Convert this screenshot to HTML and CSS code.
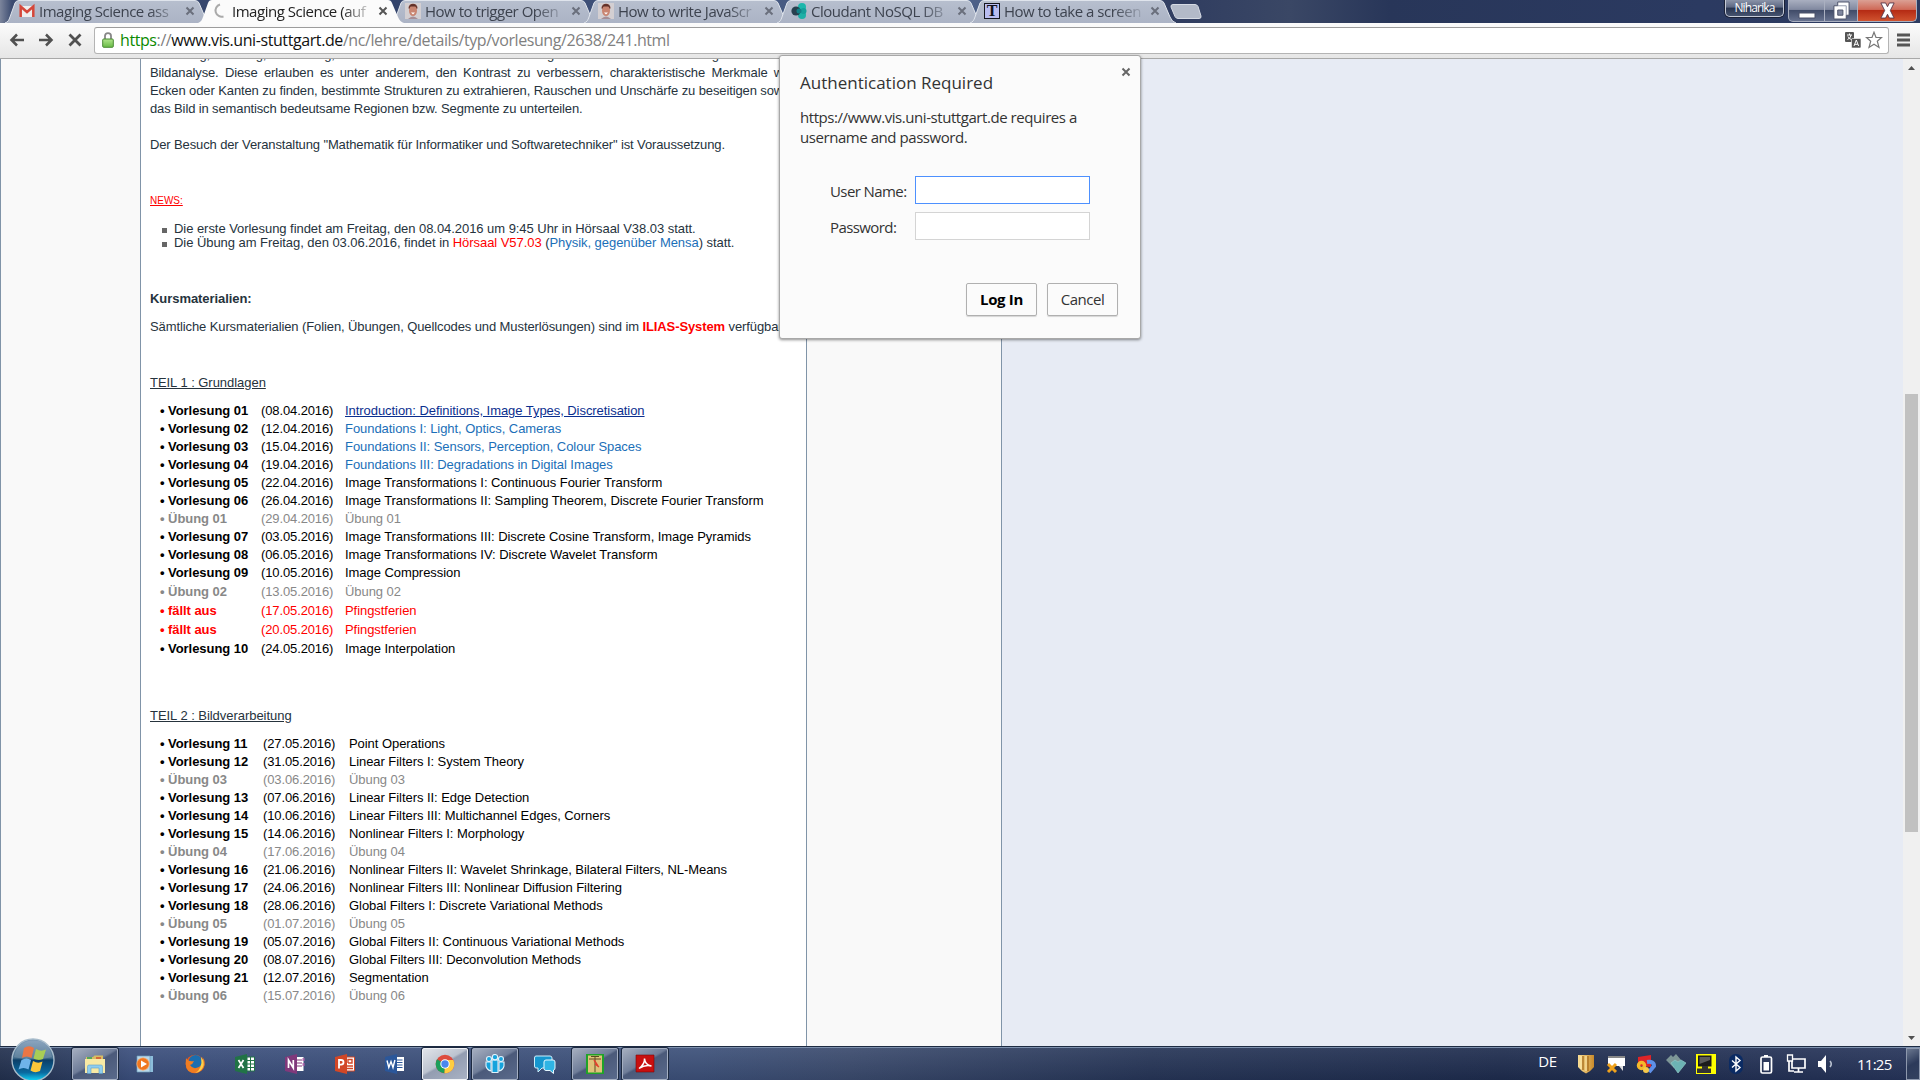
FILE: index.html
```html
<!DOCTYPE html>
<html lang="de">
<head>
<meta charset="utf-8">
<title>Imaging Science</title>
<link rel="stylesheet" href="styles.css">
</head>
<body>
<svg class="defs" width="0" height="0" aria-hidden="true">
  <defs>
    <linearGradient id="gTab" x1="0" x2="0" y1="0" y2="1"><stop offset="0" stop-color="#b7bfce"/><stop offset="1" stop-color="#abb3c5"/></linearGradient>
    <linearGradient id="gOrb" x1="0" x2="0" y1="0" y2="1"><stop offset="0" stop-color="#7d9ab8"/><stop offset=".45" stop-color="#48708f"/><stop offset=".5" stop-color="#0c3f68"/><stop offset=".8" stop-color="#0a6aa0"/><stop offset="1" stop-color="#12d8fa"/></linearGradient>
    <linearGradient id="gLock" x1="0" x2="0" y1="0" y2="1"><stop offset="0" stop-color="#b2e68c"/><stop offset="1" stop-color="#67b945"/></linearGradient>
    <linearGradient id="gGold" x1="0" x2="1" y1="0" y2="0"><stop offset="0" stop-color="#f9df96"/><stop offset="1" stop-color="#c98a2a"/></linearGradient>
    <symbol id="shape" viewBox="0 0 206 23"><path d="M0 23C3 22 4 20 5 17L10 3Q11 .5 14 .5H190Q193 .5 194 3L200 17Q202 22 206 23Z" fill="url(#gTab)"/><path d="M0 23C3 22 4 20 5 17L10 3Q11 .5 14 .5H190Q193 .5 194 3L200 17Q202 22 206 23" fill="none" stroke="#dfe4ec" stroke-width="1"/></symbol>
    <symbol id="face" viewBox="0 0 16 16"><path fill="#d3cfd2" d="M0 0h16v16H0z"/><path fill="#7a3f33" d="M3.500 5.500C3-1 13-1 12.500 5.500z"/><ellipse cx="8" cy="7.500" rx="4" ry="5.500" fill="#c98571"/><path fill="#5f3029" d="M4 6C3.500-.5 12.500-.5 12 6L10.500 3.500H5.500z"/><path fill="#fff" d="M6 9.500h4L8 11.500z"/><path fill="#a58e96" d="M3 16q5-5 10 0z"/></symbol>
    <symbol id="x" viewBox="0 0 10 10"><path d="M1.500 1.500l7 7m0-7l-7 7" stroke="currentColor" stroke-width="2" fill="none"/></symbol>
    <symbol id="leaf" viewBox="0 0 22 20"><path d="M1 3L13 0v20L1 17z" fill="currentColor"/></symbol>
  </defs>
</svg>

<header class="frame">
  <div class="tabs">
    <div class="tab"><svg class="tab-bg"><use href="#shape"/></svg>
      <svg class="fav" viewBox="0 0 16 16"><path d="M1 3h14v11H1z" fill="#eee"/><path d="M1.700 14V3.500L8 9l6.300-5.500V14" fill="none" stroke="#d5473a" stroke-width="2.500"/></svg>
      <span class="label">Imaging Science ass</span><svg class="close"><use href="#x"/></svg></div>
    <div class="tab active"><svg class="tab-bg" viewBox="0 0 206 23"><path fill="#fbfbfb" d="M0 23C3 22 4 20 5 17L10 3Q11 0 14 0H190Q193 0 194 3L200 17Q202 22 206 23Z"/></svg>
      <svg class="fav" viewBox="0 0 16 16"><path d="M8 1.500A6 6 0 1 0 11.500 13.500" fill="none" stroke="#aaa" stroke-width="2"/></svg>
      <span class="label">Imaging Science (auf</span><svg class="close"><use href="#x"/></svg></div>
    <div class="tab"><svg class="tab-bg"><use href="#shape"/></svg>
      <svg class="fav"><use href="#face"/></svg>
      <span class="label">How to trigger Open</span><svg class="close"><use href="#x"/></svg></div>
    <div class="tab"><svg class="tab-bg"><use href="#shape"/></svg>
      <svg class="fav"><use href="#face"/></svg>
      <span class="label">How to write JavaScr</span><svg class="close"><use href="#x"/></svg></div>
    <div class="tab"><svg class="tab-bg"><use href="#shape"/></svg>
      <svg class="fav" viewBox="0 0 16 16"><circle cx="11" cy="4" r="4" fill="#1cb7ac"/><circle cx="11" cy="12" r="4" fill="#1cb0a6"/><circle cx="12.500" cy="8" r="3" fill="#159f9a"/><circle cx="5" cy="8" r="4.600" fill="#28404e"/><circle cx="8" cy="8" r="2.500" fill="#127f86"/></svg>
      <span class="label">Cloudant NoSQL DB</span><svg class="close"><use href="#x"/></svg></div>
    <div class="tab"><svg class="tab-bg"><use href="#shape"/></svg>
      <span class="fav tee">T</span>
      <span class="label">How to take a screen</span><svg class="close"><use href="#x"/></svg></div>
    <svg class="newtab" viewBox="0 0 32 15"><path d="M3 .5H25Q27 .5 28 2.500L31 12Q31.500 14.500 29 14.500H8Q6 14.500 5 12.500L1 3Q.500.500 3 .5z" fill="#b3bac8" stroke="#d6dbe4"/></svg>
  </div>
  <div class="user">Niharika</div>
  <div class="winbtns">
    <span class="wb min"><svg viewBox="0 0 18 8"><path d="M1 2h16v5H1z" fill="#fff" stroke="#4a5168"/></svg></span>
    <span class="wb max"><svg viewBox="0 0 18 20"><path d="M5 1h12v14h-3v4H1V5h4z" fill="#fff" stroke="#4a5168"/><path d="M5 9.500h5.500v5.500H5z" fill="#8088a0" stroke="#4a5168"/><path d="M5 5h9v10" fill="none" stroke="#8f96a9"/></svg></span>
    <span class="wb cls"><svg viewBox="0 0 18 18"><path d="M2 1h5l2 4 2-4h5l-4 8 4 8h-5l-2-4-2 4H2l4-8z" fill="#fff" stroke="#5b3c4c"/></svg></span>
  </div>
</header>

<div class="toolbar">
  <svg class="nav" viewBox="0 0 16 14"><path d="M15 7H3M8 1.500L2.500 7L8 12.500" fill="none" stroke="#505050" stroke-width="2.500"/></svg>
  <svg class="nav" viewBox="0 0 16 14"><path d="M1 7H13M8 1.500L13.500 7L8 12.500" fill="none" stroke="#505050" stroke-width="2.500"/></svg>
  <svg class="nav" viewBox="0 0 16 14"><path d="M2.500 1.500L13.500 12.500M13.500 1.500L2.500 12.500" fill="none" stroke="#505050" stroke-width="2.800"/></svg>
  <div class="omnibox">
    <svg class="lock" viewBox="0 0 12 16"><path d="M3 8V4Q3 1.200 6 1.200T9 4V8" fill="none" stroke="#878787" stroke-width="1.800"/><rect x=".7" y="7" width="10.600" height="8.300" rx="1" fill="url(#gLock)" stroke="#4a8a35"/></svg>
    <div class="url"><b>https</b>://<i>www.vis.uni-stuttgart.de</i>/nc/lehre/details/typ/vorlesung/2638/241.html</div>
    <svg class="translate" viewBox="0 0 16 16"><rect width="9" height="10" rx="1" fill="#555"/><rect x="6.500" y="6.500" width="9.500" height="9.500" rx="1" fill="#555" stroke="#fff" stroke-width=".6"/><path d="M2 3h5M4.500 1.500V3M2.500 7.500Q6 6 6 3M3 4.500Q4 7 6.500 7.500" stroke="#fff" fill="none"/><path d="M9 14l2.300-6 2.300 6M9.800 12.300h3" stroke="#fff" fill="none"/></svg>
    <svg class="star" viewBox="0 0 18 18"><path d="M9 1.200l2 5.300h5.500L12.300 10.200 14 16.500 9 13.200 4 16.500 5.700 10.200 1.500 6.500H7z" fill="#fff" stroke="#777" stroke-width="1.200"/></svg>
  </div>
  <svg class="burger" viewBox="0 0 13 14"><path d="M0 2h13M0 7h13M0 12h13" stroke="#555" stroke-width="3"/></svg>
</div>

<main class="view">
  <div class="side left"></div>
  <article class="content">
    <div class="prose">
      <p class="line cut"><span>Entfaltung,</span> <span>Filterung,</span> <span>Erkennung,</span> <span class="w2">und Restauration sowie die Bewertung</span> <span class="w3">der mathematischen Umsetzung</span></p>
      <p class="line full">Bildanalyse. Diese erlauben es unter anderem, den Kontrast zu verbessern, charakteristische Merkmale wie</p>
      <p class="line full">Ecken oder Kanten zu finden, bestimmte Strukturen zu extrahieren, Rauschen und Unschärfe zu beseitigen sowie</p>
      <p class="line">das Bild in semantisch bedeutsame Regionen bzw. Segmente zu unterteilen.</p>
      <p class="line gap1">Der Besuch der Veranstaltung "Mathematik für Informatiker und Softwaretechniker" ist Voraussetzung.</p>
    </div>
    <p class="news">NEWS:</p>
    <ul class="newslist">
      <li>Die erste Vorlesung findet am Freitag, den 08.04.2016 um 9:45 Uhr in Hörsaal V38.03 statt.</li>
      <li>Die Übung am Freitag, den 03.06.2016, findet in <em>Hörsaal V57.03</em> (<a>Physik, gegenüber Mensa</a>) statt.</li>
    </ul>
    <h3 class="line kurs">Kursmaterialien:</h3>
    <p class="line mat">Sämtliche Kursmaterialien (Folien, Übungen, Quellcodes und Musterlösungen) sind im <strong>ILIAS-System</strong> verfügbar.</p>

    <h4 class="line part">TEIL 1 : Grundlagen</h4>
    <ul class="sched">
      <li><b>• Vorlesung 01</b><span>(08.04.2016)</span><a class="hover">Introduction: Definitions, Image Types, Discretisation</a></li>
      <li><b>• Vorlesung 02</b><span>(12.04.2016)</span><a>Foundations I: Light, Optics, Cameras</a></li>
      <li><b>• Vorlesung 03</b><span>(15.04.2016)</span><a>Foundations II: Sensors, Perception, Colour Spaces</a></li>
      <li><b>• Vorlesung 04</b><span>(19.04.2016)</span><a>Foundations III: Degradations in Digital Images</a></li>
      <li><b>• Vorlesung 05</b><span>(22.04.2016)</span><span>Image Transformations I: Continuous Fourier Transform</span></li>
      <li><b>• Vorlesung 06</b><span>(26.04.2016)</span><span>Image Transformations II: Sampling Theorem, Discrete Fourier Transform</span></li>
      <li class="ex"><b>• Übung 01</b><span>(29.04.2016)</span><span>Übung 01</span></li>
      <li><b>• Vorlesung 07</b><span>(03.05.2016)</span><span>Image Transformations III: Discrete Cosine Transform, Image Pyramids</span></li>
      <li><b>• Vorlesung 08</b><span>(06.05.2016)</span><span>Image Transformations IV: Discrete Wavelet Transform</span></li>
      <li><b>• Vorlesung 09</b><span>(10.05.2016)</span><span>Image Compression</span></li>
      <li class="ex tall"><b>• Übung 02</b><span>(13.05.2016)</span><span>Übung 02</span></li>
      <li class="off tall"><b>• fällt aus</b><span>(17.05.2016)</span><span>Pfingstferien</span></li>
      <li class="off tall"><b>• fällt aus</b><span>(20.05.2016)</span><span>Pfingstferien</span></li>
      <li class="tall"><b>• Vorlesung 10</b><span>(24.05.2016)</span><span>Image Interpolation</span></li>
    </ul>

    <h4 class="line part two">TEIL 2 : Bildverarbeitung</h4>
    <ul class="sched wide">
      <li><b>• Vorlesung 11</b><span>(27.05.2016)</span><span>Point Operations</span></li>
      <li><b>• Vorlesung 12</b><span>(31.05.2016)</span><span>Linear Filters I: System Theory</span></li>
      <li class="ex"><b>• Übung 03</b><span>(03.06.2016)</span><span>Übung 03</span></li>
      <li><b>• Vorlesung 13</b><span>(07.06.2016)</span><span>Linear Filters II: Edge Detection</span></li>
      <li><b>• Vorlesung 14</b><span>(10.06.2016)</span><span>Linear Filters III: Multichannel Edges, Corners</span></li>
      <li><b>• Vorlesung 15</b><span>(14.06.2016)</span><span>Nonlinear Filters I: Morphology</span></li>
      <li class="ex"><b>• Übung 04</b><span>(17.06.2016)</span><span>Übung 04</span></li>
      <li><b>• Vorlesung 16</b><span>(21.06.2016)</span><span>Nonlinear Filters II: Wavelet Shrinkage, Bilateral Filters, NL-Means</span></li>
      <li><b>• Vorlesung 17</b><span>(24.06.2016)</span><span>Nonlinear Filters III: Nonlinear Diffusion Filtering</span></li>
      <li><b>• Vorlesung 18</b><span>(28.06.2016)</span><span>Global Filters I: Discrete Variational Methods</span></li>
      <li class="ex"><b>• Übung 05</b><span>(01.07.2016)</span><span>Übung 05</span></li>
      <li><b>• Vorlesung 19</b><span>(05.07.2016)</span><span>Global Filters II: Continuous Variational Methods</span></li>
      <li><b>• Vorlesung 20</b><span>(08.07.2016)</span><span>Global Filters III: Deconvolution Methods</span></li>
      <li><b>• Vorlesung 21</b><span>(12.07.2016)</span><span>Segmentation</span></li>
      <li class="ex"><b>• Übung 06</b><span>(15.07.2016)</span><span>Übung 06</span></li>
    </ul>
  </article>
  <div class="side right"></div>
  <div class="rest"></div>
  <div class="scroll">
    <svg class="arrow" viewBox="0 0 7 4"><path d="M0 4L3.500 0 7 4z" fill="#505050"/></svg>
    <div class="thumb"></div>
    <svg class="arrow" viewBox="0 0 7 4"><path d="M0 0h7L3.500 4z" fill="#505050"/></svg>
  </div>
</main>

<section class="dialog">
  <svg class="dclose"><use href="#x"/></svg>
  <h2>Authentication Required</h2>
  <p>https://www.vis.uni-stuttgart.de requires a<br>username and password.</p>
  <div class="form">
    <span>User Name:</span><div class="field focus"></div>
    <span>Password:</span><div class="field"></div>
  </div>
  <div class="actions"><div class="btn primary">Log In</div><div class="btn">Cancel</div></div>
</section>

<footer class="taskbar">
  <div class="orb">
    <svg viewBox="0 0 44 44"><circle cx="22" cy="22" r="21" fill="url(#gOrb)" stroke="#a8bccb" stroke-width="1.400"/>
      <path d="M13 10q5-3.500 10 0l-2.500 10q-5-3-9.500 0z" fill="#e8622a"/><path d="M25 11q5 3 10 .5l-3 9.500q-5 2-9.500-.5z" fill="#9cc63c"/><path d="M10.500 22q5-3 9.500 0l-2.500 9.500q-5-3-10 0z" fill="#6fb4ea"/><path d="M22 23q5 3 9.500.5L29 33q-5 2.500-9.500-.5z" fill="#fbc73a"/><path d="M3 19Q6 3 22 2.500T41 19Q22 24 3 19z" fill="#fff" opacity=".13"/></svg>
  </div>
  <div class="apps">
    <div class="app open"><svg viewBox="0 0 22 20"><path d="M2 3h7l1.500-1.500H19V18H2z" fill="#d9bd62"/><path d="M1 5h20v14H1z" fill="#f8e9a4"/><path d="M3 3h5v2H3z" fill="#55a65b"/><path d="M12 3h5v2h-5z" fill="#d4693b"/><path d="M3.500 19.500v-7q0-1.500 1.500-1.500h12q1.500 0 1.500 1.500v7h-3.500V14H7v5.500z" fill="#8fcdee" stroke="#5a9fcc" stroke-width=".6"/></svg></div>
    <div class="app"><svg viewBox="0 0 22 20"><path d="M6 2h13v16H6z" fill="#8dbedb"/><path d="M3 2h13v16H3z" fill="#b9d8ea" stroke="#6f9dbc" stroke-width=".7"/><circle cx="9" cy="10" r="6.200" fill="#f0771f" stroke="#f9b77e" stroke-width=".7"/><path d="M7 6.500l6 3.500-6 3.500z" fill="#fff"/></svg></div>
    <div class="app"><svg viewBox="0 0 22 20"><circle cx="11" cy="10" r="9.300" fill="#e6581b"/><circle cx="11.500" cy="8" r="7" fill="#1b6eaf"/><path d="M2 4Q4 8 10 7q-1 3-4 4 3 5 9 2 5-3 3.500-10Q22 8 20 13t-9 6Q2 19 1.700 10z" fill="#ef7d22"/><path d="M17 3q4 5 2 10t-8 6q8-4 6-16z" fill="#fbd04b"/></svg></div>
    <div class="app excel"><svg viewBox="0 0 22 20"><path d="M13 3h7.500v14H13z" fill="#fff" stroke="#217346"/><path d="M13 6.500h7M13 10h7M13 13.500h7M16.500 3v14" stroke="#217346"/><use href="#leaf"/><path d="M4.500 6l5 8m0-8l-5 8" stroke="#fff" stroke-width="1.700"/></svg></div>
    <div class="app onenote"><svg viewBox="0 0 22 20"><path d="M13 3h6.500v14H13z" fill="#fff"/><path d="M13 6h5M13 9h5M13 12h5" stroke="#80397b"/><path d="M18.500 4h2v3h-2zM18.500 9h2v3h-2z" fill="#b06aad"/><use href="#leaf"/><path d="M4.500 14V6l4.800 8V6" fill="none" stroke="#fff" stroke-width="1.700"/></svg></div>
    <div class="app ppt"><svg viewBox="0 0 22 20"><path d="M12 3h8.500v14H12z" fill="#fff" stroke="#d24726"/><path d="M14 9V5.500h4V9h-4M13 12h6M13 14.500h6" fill="none" stroke="#d24726" stroke-width="1.400"/><use href="#leaf"/><path d="M5 14.500V6h2Q9.500 6 9.500 8.300T7 10.700H5" fill="none" stroke="#fff" stroke-width="1.800"/></svg></div>
    <div class="app word"><svg viewBox="0 0 22 20"><path d="M12 3h8v14h-8z" fill="#fff"/><path d="M12 6h6.500M12 8.500h6.500M12 11h6.500M12 13.500h6.500" stroke="#2b579a"/><use href="#leaf"/><path d="M3 6.500l1.800 7L7 7.500l2 6 1.900-7.500" fill="none" stroke="#fff" stroke-width="1.400"/></svg></div>
    <div class="app open lit"><svg viewBox="0 0 22 20"><circle cx="11" cy="10" r="9.300" fill="#dd4b3e"/><path d="M11 10L3 5.300A9.300 9.300 0 0 0 10.500 19.300z" fill="#1c9f5b"/><path d="M11 10L10.500 19.300A9.300 9.300 0 0 0 19.300 6H11z" fill="#fdcd41"/><circle cx="11" cy="10" r="4.700" fill="#fff"/><circle cx="11" cy="10" r="3.700" fill="#4a86ee"/></svg></div>
    <div class="app open"><svg viewBox="0 0 22 20"><g fill="#16a3dc" stroke="#dff3fc" stroke-width="1.100"><circle cx="5" cy="5" r="2.500"/><circle cx="17" cy="5" r="2.500"/><path d="M2 8h5v9q-4-1-5-5zM20 8h-5v9q4-1 5-5z"/><path d="M8 6h6v12.500H8z"/><circle cx="11" cy="3.200" r="2.700"/></g></svg></div>
    <div class="app"><svg viewBox="0 0 22 20"><path d="M2 2h14q2 0 2 2v8q0 2-2 2H8l-4 4v-4H2q-1.500 0-1.500-2V4Q.5 2 2 2z" fill="#1697cf" stroke="#cdeffc"/><path d="M12 6h7q2 0 2 2v6q0 2-1.500 2v3.500L16 16.500h-4q-2 0-2-2V8q0-2 2-2z" fill="#2fb4e4" stroke="#e6f8ff"/></svg></div>
    <div class="app open"><svg viewBox="0 0 22 20"><path d="M2 0h18v20H2z" fill="#1fa328"/><path d="M4 1.500h14v17H4z" fill="#dfc27a"/><path d="M5 5h12M11 3v15M7 2.500h8" stroke="#5c4a22"/><path d="M10 6l4 6M11 10l4 3" stroke="#e0412e" stroke-width="1.400"/></svg></div>
    <div class="app open"><svg viewBox="0 0 22 20"><path d="M2 1h18v17H2z" fill="#c80f0f" stroke="#7c0808" stroke-width=".6"/><path d="M5 14.500Q11 10 10.500 4.500 11 11 17.500 12 11 10.500 5 14.500z" fill="none" stroke="#fff" stroke-width="1.500"/></svg></div>
  </div>
  <div class="lang">DE</div>
  <div class="tray">
    <svg viewBox="0 0 20 20"><path d="M2 1h16v12q-3 4-8 6.500Q5 17 2 13z" fill="url(#gGold)"/><path d="M7 2v14M12 2v15" stroke="#a86f20" stroke-width="1.400"/><path d="M5 2v13M10 2v15" stroke="#fff0b5"/></svg>
    <svg viewBox="0 0 20 20"><path d="M2 2h17v10H2z" fill="#fff"/><path d="M2 2h17v2H2z" fill="#888"/><path d="M13 12h4v5z" fill="#ddd"/><path d="M2 10l8 8M10 10l-8 8" stroke="#efa21c" stroke-width="3"/></svg>
    <svg viewBox="0 0 20 20"><path d="M2 3l13-2v12L2 12z" fill="#df2427"/><path d="M11 8q7-1 7 4l-5 6" fill="none" stroke="#5f90e8" stroke-width="4"/><circle cx="5.500" cy="11.500" r="3" fill="none" stroke="#f4b92b" stroke-width="3.500"/><circle cx="10" cy="16" r="3" fill="#f7c94a"/></svg>
    <svg viewBox="0 0 20 20"><path d="M0 6l5-5 2 2 3-3 5 6-7 8z" fill="#7d9696"/><path d="M5 9l4-3 3 2 3-2 5 3-8 10z" fill="#6cb3b4" stroke="#91c8c6" stroke-width=".7"/></svg>
    <svg viewBox="0 0 20 20"><path d="M0 0h20v20H0z" fill="#ff0"/><path d="M2 1.500h13.500v11H2z" fill="#1c1c1c"/><path d="M3.500 3h10.500v3L3.500 10z" fill="#5c5c5c"/><path d="M6 12h6v3H6zM1 14.500h14V19H1z" fill="#333"/></svg>
    <svg viewBox="0 0 20 20"><rect x="3" width="14" height="20" rx="6.500" fill="#0b2b63"/><path d="M6 6.500l8 7-4 3.500V3l4 3.500-8 7" fill="none" stroke="#fff" stroke-width="1.400"/></svg>
    <svg viewBox="0 0 20 20"><rect x="5" y="3" width="10.500" height="16" rx="1.500" fill="none" stroke="#fff" stroke-width="1.700"/><path d="M8 1h4v2H8zM7.500 8h5.500v8.500H7.500z" fill="#fff"/></svg>
    <svg viewBox="0 0 20 20"><path d="M6 5h13v9H6zM8 18h9M12.500 14v4M3 7v10h5" fill="none" stroke="#fff" stroke-width="1.700"/><path d="M1.500 1h5v6h-5z" fill="#33405f" stroke="#fff" stroke-width="1.300"/></svg>
    <svg viewBox="0 0 20 20"><path d="M2 7h3l5-6v18l-5-6H2z" fill="#fff"/><path d="M14 7q2.500 3 0 6" fill="none" stroke="#b8c0cf" stroke-width="1.600"/></svg>
  </div>
  <div class="clock">11:25</div>
  <div class="desk"></div>
</footer>
</body>
</html>
```
FILE: styles.css
```css
* { box-sizing: border-box; }
body {
  margin: 0; width: 1920px; height: 1080px; overflow: hidden;
  display: flex; flex-direction: column; position: relative;
  font-family: "Open Sans", "Noto Sans", sans-serif; background: #fff;
}
p, h2, h3, h4, ul { margin: 0; padding: 0; list-style: none; font-weight: normal; }
svg { display: block; }
.defs { position: absolute; }

/* window frame */
.frame {
  height: 23px; flex: none; display: flex; align-items: flex-start;
  background: linear-gradient(90deg, #7c859c 0, #3b4b70 12px, #33446c 400px, #51658c 950px, #303d60 1180px, #3a4765 1290px, #283659 1390px, #2b3a61 1700px, #2d3b60 100%);
}
.tabs { display: flex; padding-left: 6px; flex: 1; }
.tab { position: relative; width: 193px; height: 23px; display: flex; align-items: center; padding-left: 13px; padding-bottom: 1px; flex: none; }
.tab-bg { position: absolute; left: -1px; top: 0; width: 206px; height: 23px; }
.tab.active { z-index: 2; }
.fav { position: relative; width: 16px; height: 16px; margin-right: 4px; flex: none; }
.tee { background: #b9bdf0; border: 1px solid #15171f; color: #10121a; font: bold 16px/14px "Liberation Serif", serif; text-align: center; }
.label {
  position: relative; width: 140px; white-space: nowrap;
  font-size: 15px; line-height: 22px; letter-spacing: -.48px; color: #3d434f;
  -webkit-mask-image: linear-gradient(90deg, #000 110px, rgba(0,0,0,.15) 138px);
  mask-image: linear-gradient(90deg, #000 110px, rgba(0,0,0,.15) 138px);
}
.active .label { color: #222; }
.close { position: relative; width: 10px; height: 10px; margin-left: 6px; color: #6a6f7c; flex: none; }
.active .close { color: #555; }
.newtab { width: 32px; height: 15px; margin: 4px 0 0 6px; }
.user {
  width: 59px; height: 17px; margin-right: 4px; border: 1px solid #c5cad6; border-top: 0; border-radius: 0 0 5px 5px;
  background: linear-gradient(#8a93a8 0, #5d6883 45%, #28344f 50%, #46536f); box-shadow: 0 0 0 1px #1b2237;
  color: #fff; font-size: 12px; line-height: 15px; letter-spacing: -.85px; text-align: center;
}
.winbtns { display: flex; width: 132px; height: 23px; }
.wb { display: flex; align-items: center; justify-content: center; height: 22px; border: 1px solid #aab0c0; border-top: 0; background: linear-gradient(#a9afc0, #8189a0 45%, #414c69 50%, #67728f); }
.min { width: 37px; border-radius: 0 0 0 5px; padding-top: 8px; }
.max { width: 33px; border-left: 0; }
.cls { width: 59px; border-left: 0; border-radius: 0 0 5px 0; background: linear-gradient(#dba094, #cf6a58 45%, #b52b14 50%, #d0532f); }
.min svg { width: 18px; height: 8px; }
.max svg { width: 17px; height: 19px; }
.cls svg { width: 17px; height: 17px; }

/* toolbar */
.toolbar { height: 36px; flex: none; display: flex; align-items: center; padding: 0 10px 1px 9px; border-bottom: 1px solid #a8a8a8; background: linear-gradient(#fbfbfb, #e6e6e6); }
.nav { width: 16px; height: 14px; margin-right: 13px; flex: none; }
.omnibox { width: 1795px; height: 27px; margin-left: -2px; display: flex; align-items: center; padding: 0 5px 0 7px; background: #fff; border: 1px solid #b4b4b4; border-top-color: #9c9c9c; border-radius: 3px; flex: none; }
.lock { width: 12px; height: 16px; margin-right: 6px; }
.url { flex: 1; font-size: 16px; line-height: 24px; letter-spacing: -.41px; color: #808080; white-space: nowrap; }
.url b { font-weight: normal; color: #0b8a00; }
.url i { font-style: normal; color: #111; }
.translate { width: 16px; height: 16px; margin-right: 4px; }
.star { width: 18px; height: 18px; }
.burger { width: 13px; height: 14px; margin-left: 8px; }

/* page */
.view { height: 987px; flex: none; display: flex; overflow: hidden; }
.side { background: #f9f9f9; }
.left { width: 140px; border-left: 1px solid #8094a8; }
.content { width: 667px; border: solid #8094a8; border-width: 0 1px; background: #fff; padding-left: 9px; font-family: "Liberation Sans", Arial, sans-serif; font-size: 13px; color: #26333d; }
.right { width: 195px; border-right: 1px solid #8094a8; }
.rest { flex: 1; background: #e7ebf4; }
.scroll { width: 17px; background: #f0f0f0; display: flex; flex-direction: column; align-items: center; padding: 7px 0 6px; }
.arrow { width: 7px; height: 4px; }
.thumb { width: 13px; height: 438px; margin: 324px 0 auto; background: #c1c1c1; }

.line { height: 18px; line-height: 18px; white-space: nowrap; }
.prose { width: 643px; letter-spacing: -.125px; }
.full { text-align: justify; text-align-last: justify; white-space: normal; word-spacing: -1px; }
.cut { margin-top: -13px; display: flex; gap: 4px; letter-spacing: -.2px; }
.w2 { width: 188px; text-align-last: justify; }
.w3 { width: 188px; text-align-last: justify; }
.gap1 { margin-top: 18px; }
.news { margin-top: 40px; height: 14px; font-size: 10px; line-height: 14px; color: #f00; text-decoration: underline; }
.newslist { margin-top: 14px; padding-left: 12px; letter-spacing: -.05px; }
.newslist li { height: 14px; line-height: 14px; display: block; white-space: nowrap; }
.newslist li::before { content: ""; display: inline-block; width: 5px; height: 5px; margin-right: 7px; background: #666; }
.newslist em { font-style: normal; color: #f00; }
.newslist a { color: #1b6fb8; }
.kurs { margin-top: 40px; font-size: 13px; font-weight: bold; letter-spacing: -.06px; }
.mat { margin-top: 10px; letter-spacing: -.1px; }
.mat strong { color: #f00; }
.part { margin-top: 38px; font-size: 13px; text-decoration: underline; letter-spacing: -.04px; }
.two { margin-top: 49px; }
.sched { margin-top: 10px; padding-left: 10px; color: #000; }
.sched li { display: grid; grid-template-columns: 101px 84px 1fr; height: 18px; line-height: 18px; white-space: nowrap; letter-spacing: -.055px; }
.sched li > span:nth-child(2) { letter-spacing: -.12px; }
.sched.wide li { grid-template-columns: 103px 86px 1fr; }
.sched li.tall { height: 19px; line-height: 20px; }
.sched a { color: #1b6fb8; }
.sched a.hover { color: #0b2f8f; text-decoration: underline; }
.sched .ex { color: #888; }
.sched .off { color: #f00; }

/* authentication dialog */
.dialog {
  position: absolute; left: 779px; top: 55px; width: 362px; height: 284px; padding: 15px 22px 22px 20px;
  background: #fbfbfb; border: 1px solid #a8a8a8; border-radius: 3px; box-shadow: 0 1px 3px rgba(0,0,0,.45); color: #333; z-index: 5;
}
.dclose { position: absolute; right: 9px; top: 11px; width: 10px; height: 10px; color: #666; }
.dialog h2 { font-size: 17px; line-height: 23px; }
.dialog p { margin-top: 13px; font-size: 15px; line-height: 20px; letter-spacing: -.44px; }
.form { margin-top: 29px; padding-left: 30px; display: grid; grid-template-columns: 85px 175px; grid-auto-rows: 28px; row-gap: 8px; font-size: 15px; line-height: 30px; letter-spacing: -.59px; }
.field { height: 28px; background: #fff; border: 1px solid #d4d4d4; }
.focus { border-color: #4d90fe; }
.actions { margin-top: 43px; display: flex; justify-content: flex-end; gap: 10px; }
.btn { width: 71px; height: 33px; border: 1px solid #b0b0b0; border-radius: 2px; box-shadow: 0 1px 1px rgba(0,0,0,.15); text-align: center; font-size: 15px; line-height: 30px; letter-spacing: -.45px; }
.primary { font-weight: bold; color: #000; letter-spacing: -.33px; }

/* taskbar */
.taskbar {
  height: 34px; flex: none; display: flex; align-items: center; border-top: 1px solid #1d2b42; box-shadow: inset 0 1px 0 #7d90ad; color: #fff;
  background: linear-gradient(rgba(255,255,255,.08), rgba(0,0,0,.08)), linear-gradient(90deg, #22304e 0, #2b3c60 70px, #3a4e7c 130px, #3c5079 700px, #3a4a6d 850px, #263557 1150px, #1e2c4e 1500px, #26345a 100%);
}
.orb { width: 72px; height: 33px; padding-left: 11px; flex: none; }
.orb svg { width: 44px; height: 44px; margin-top: -9px; position: relative; }
.apps { display: flex; gap: 4px; flex: 1; }
.app { width: 46px; height: 32px; display: flex; align-items: center; justify-content: center; flex: none; }
.app > svg { width: 22px; height: 20px; }
.open { border: 1px solid #a5afc2; border-radius: 2px; box-shadow: 0 0 0 1px #1c2940; background: linear-gradient(150deg, #a5aebf 0, #6f7d99 45%, #4b5a7a 50%, #5a6a8b 100%); }
.lit { border-color: #f0f2f6; background: linear-gradient(150deg, #e1e4e9 0, #bcc3cf 45%, #939db1 50%, #a9b2c4 100%); }
.excel { color: #217346; } .onenote { color: #80397b; } .ppt { color: #d24726; } .word { color: #2b579a; }
.lang { font-size: 15px; line-height: 20px; letter-spacing: -.2px; margin: -5px 19px 0 0; }
.tray { display: flex; gap: 10px; }
.tray svg { width: 20px; height: 20px; }
.clock { margin-left: 21px; width: 49px; font-size: 15px; letter-spacing: -.75px; line-height: 20px; margin-top: 1px; }
.desk { width: 14px; height: 32px; border: 1px solid #8d98ad; background: linear-gradient(150deg, #6b7890, #2c3a5a 50%, #34425f); }
```
